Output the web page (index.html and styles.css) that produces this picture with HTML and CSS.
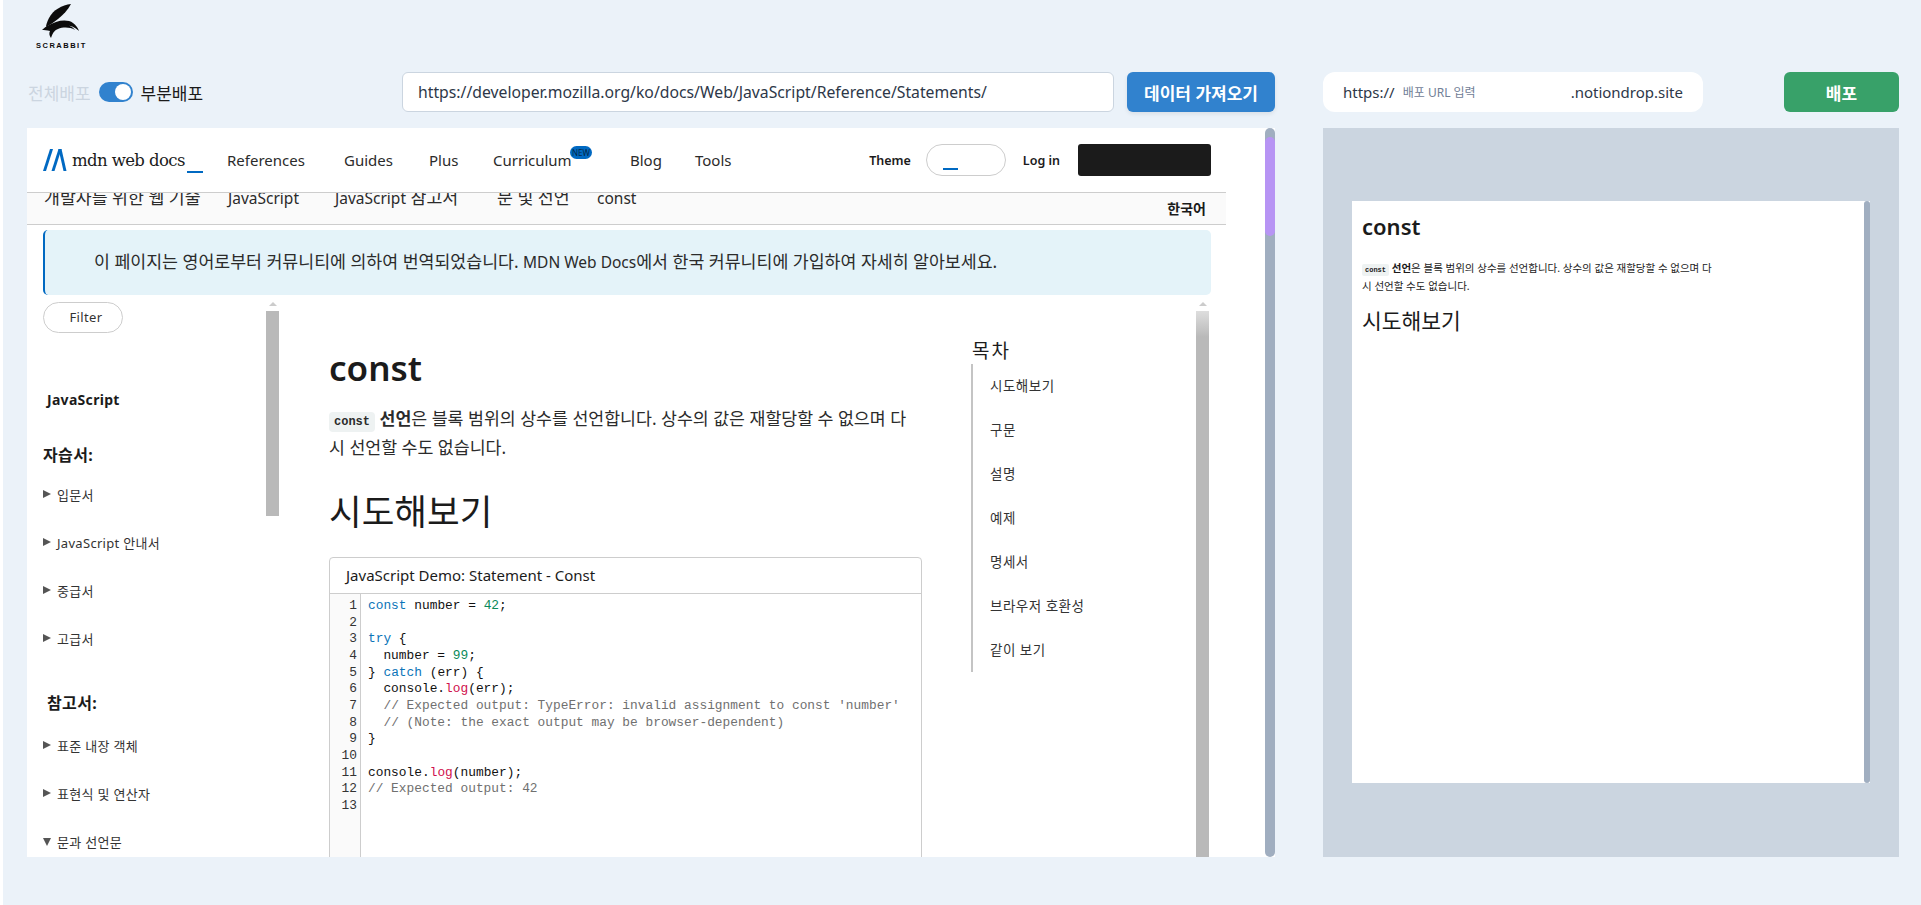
FILE: index.html
```html
<!DOCTYPE html>
<html lang="ko">
<head>
<meta charset="utf-8"/>
<title>Scrabbit</title>
<link rel="stylesheet" href="styles.css">
</head>
<body>
<div class="page">

  <!-- 로고 -->
  <header class="brand">
    <svg class="brand-mark" viewBox="0 0 37 35" width="37" height="35">
      <path fill="#0c0c0c" d="M29 0C20 1 11 6 7 14C5 18 4 21 4 23C8 21 12 18 16 15C21 11 26 6 29 0Z"/>
      <path fill="#0c0c0c" d="M0 26C4 22 9 20 14 18C20 16 27 16 31 19C34 21 36 24 37 27C33 23 28 21 22 21C27 21 31 23 33 26C28 23 21 23 16 25C13 26 11 28 9 34C7 31 7 29 8 27C5 26 2 26 0 26Z"/>
    </svg>
    <span class="brand-name">SCRABBIT</span>
  </header>

  <div class="workspace">

    <!-- 왼쪽: 원본 페이지 -->
    <section class="left-col">
      <div class="toolbar">
        <div class="mode-switch">
          <span class="mode-off">전체배포</span>
          <span class="toggle"><span class="toggle-knob"></span></span>
          <span class="mode-on">부분배포</span>
        </div>
        <div class="url-input">https://developer.mozilla.org/ko/docs/Web/JavaScript/Reference/Statements/</div>
        <button class="fetch-btn" type="button">데이터 가져오기</button>
      </div>

      <div class="frame">
        <div class="frame-view">
          <nav class="mdn-nav">
            <div class="mdn-logo">
              <svg viewBox="0 0 24 22" width="24" height="22">
                <path fill="#0069c2" d="M0 22L7 0H10L3 22Z"/>
                <path fill="#0069c2" d="M8.500 22L15.500 0H18.500L11.500 22Z"/>
                <path fill="#0069c2" d="M15.500 0H18.500L23.500 22H20.500Z"/>
              </svg>
              <span class="mdn-word">mdn web docs</span>
              <span class="mdn-cursor"></span>
            </div>
            <div class="mdn-links">
              <a>References</a>
              <a>Guides</a>
              <a>Plus</a>
              <a class="has-badge">Curriculum<span class="new-badge">NEW</span></a>
              <a>Blog</a>
              <a>Tools</a>
            </div>
            <div class="mdn-user">
              <span class="user-label">Theme</span>
              <span class="theme-pill"><span class="theme-cursor"></span></span>
              <span class="user-label">Log in</span>
              <span class="signup-box"></span>
            </div>
          </nav>

          <div class="crumbs">
            <div class="crumb-list">
              <span class="crumb-a">개발자를 위한 웹 기술</span>
              <span class="crumb-b latin">JavaScript</span>
              <span class="crumb-c"><span class="latin">JavaScript</span> 참고서</span>
              <span class="crumb-d">문 및 선언</span>
              <span class="latin">const</span>
            </div>
            <span class="lang">한국어</span>
          </div>

          <div class="notice">이 페이지는 영어로부터 커뮤니티에 의하여 번역되었습니다. <span class="latin">MDN Web Docs</span>에서 한국 커뮤니티에 가입하여 자세히 알아보세요.</div>

          <div class="docs">
            <aside class="sidebar">
              <div class="side-list">
                <div class="filter">Filter</div>
                <div class="side-title">JavaScript</div>
                <h4 class="side-head">자습서:</h4>
                <div class="side-item"><i class="tri"></i>입문서</div>
                <div class="side-item"><i class="tri"></i>JavaScript 안내서</div>
                <div class="side-item"><i class="tri"></i>중급서</div>
                <div class="side-item"><i class="tri"></i>고급서</div>
                <h4 class="side-head side-head-ref">참고서:</h4>
                <div class="side-item"><i class="tri"></i>표준 내장 객체</div>
                <div class="side-item"><i class="tri"></i>표현식 및 연산자</div>
                <div class="side-item"><i class="tri tri-open"></i>문과 선언문</div>
              </div>
              <div class="side-scroll">
                <span class="arrow-up"></span>
                <span class="side-thumb"></span>
              </div>
            </aside>

            <main class="article">
              <h1>const</h1>
              <p class="lead"><code>const</code> <strong>선언</strong>은 블록 범위의 상수를 선언합니다. 상수의 값은 재할당할 수 없으며 다시 선언할 수도 없습니다.</p>
              <h2>시도해보기</h2>
              <div class="demo">
                <div class="demo-title">JavaScript Demo: Statement - Const</div>
                <div class="demo-body">
                  <pre class="gutter">1
2
3
4
5
6
7
8
9
10
11
12
13</pre>
                  <pre class="code"><span class="kw">const</span> number = <span class="num">42</span>;

<span class="kw">try</span> {
  number = <span class="num">99</span>;
} <span class="kw">catch</span> (err) {
  console.<span class="fn">log</span>(err);
  <span class="cm">// Expected output: TypeError: invalid assignment to const 'number'</span>
  <span class="cm">// (Note: the exact output may be browser-dependent)</span>
}

console.<span class="fn">log</span>(number);
<span class="cm">// Expected output: 42</span>
</pre>
                </div>
              </div>
            </main>

            <aside class="toc">
              <div class="toc-title">목차</div>
              <ul class="toc-list">
                <li>시도해보기</li>
                <li>구문</li>
                <li>설명</li>
                <li>예제</li>
                <li>명세서</li>
                <li>브라우저 호환성</li>
                <li>같이 보기</li>
              </ul>
            </aside>

            <div class="main-scroll">
              <span class="arrow-up"></span>
              <span class="main-thumb"></span>
            </div>
          </div>
        </div>
        <div class="frame-scroll"><span class="frame-thumb"></span></div>
      </div>
    </section>

    <!-- 오른쪽: 배포 미리보기 -->
    <section class="right-col">
      <div class="toolbar">
        <div class="deploy-input">
          <span class="scheme">https://</span>
          <span class="placeholder">배포 URL 입력</span>
          <span class="suffix">.notiondrop.site</span>
        </div>
        <button class="deploy-btn" type="button">배포</button>
      </div>
      <div class="preview">
        <div class="preview-page">
          <div class="preview-body">
            <div class="pv-title">const</div>
            <p class="pv-lead"><code>const</code> <strong>선언</strong>은 블록 범위의 상수를 선언합니다. 상수의 값은 재할당할 수 없으며 다시 선언할 수도 없습니다.</p>
            <div class="pv-h2">시도해보기</div>
          </div>
          <div class="preview-scroll"></div>
        </div>
      </div>
    </section>

  </div>
</div>
</body>
</html>
```

FILE: styles.css
```css
* {
  box-sizing: border-box;
}

body {
  margin: 0;
  background: #fff;
  font-family: "Noto Sans", "Noto Sans CJK KR", sans-serif;
  color: #1b1b1b;
}

.page {
  margin-left: 3px;
  height: 905px;
  overflow: hidden;
  background: #ebf2f9;
}

/* latin runs sit smaller next to the hangul */
.latin {
  font-size: 15.500px;
}

/* logo */
.brand {
  height: 72px;
  padding: 4px 0 0 33px;
  width: 100px;
  display: flex;
  flex-direction: column;
}

.brand-mark {
  margin-left: 6px;
}

.brand-name {
  margin-top: 2px;
  font-family: "Liberation Sans", sans-serif;
  font-size: 7.500px;
  line-height: 9px;
  font-weight: 700;
  letter-spacing: 1.500px;
  color: #0c0c0c;
}

.workspace {
  display: flex;
  gap: 48px;
  padding-left: 24px;
}

.left-col {
  width: 1248px;
}

.right-col {
  width: 576px;
}

.toolbar {
  display: flex;
  height: 40px;
  margin-bottom: 16px;
}

/* toggle */
.mode-switch {
  width: 375px;
  padding-left: 1px;
  display: flex;
  align-items: center;
  font-size: 17px;
}

.mode-off {
  color: #cbd5e0;
}

.toggle {
  width: 34px;
  height: 20px;
  margin: 0 8px;
  border-radius: 10px;
  background: #3182ce;
  display: flex;
  justify-content: flex-end;
  align-items: center;
  padding-right: 2px;
}

.toggle-knob {
  width: 16px;
  height: 16px;
  border-radius: 50%;
  background: #fff;
}

.url-input {
  flex: 1;
  margin-right: 13px;
  padding-left: 15px;
  background: #fff;
  border: 1px solid #cbd5e0;
  border-radius: 6px;
  font-size: 15.750px;
  line-height: 38px;
  color: #2d3748;
}

.fetch-btn {
  width: 148px;
  border: none;
  border-radius: 6px;
  background: #3182ce;
  color: #fff;
  font-family: inherit;
  font-size: 17px;
  font-weight: 700;
  box-shadow: 0 2px 4px rgba(0, 0, 0, 0.08);
}

/* iframe area */
.frame {
  display: flex;
  height: 729px;
  background: #fff;
}

.frame-view {
  width: 1238px;
  overflow: hidden;
}

.frame-scroll {
  width: 10px;
  background: #a0aec0;
  border-radius: 5px;
  padding-top: 9px;
}

.frame-thumb {
  display: block;
  height: 99px;
  background: #b794f4;
  border-radius: 5px;
}

.mdn-nav {
  width: 1199px;
  height: 65px;
  padding: 16px 15px 0 16px;
  display: flex;
  align-items: flex-start;
  border-bottom: 1px solid #cdcdcd;
}

.mdn-logo {
  width: 184px;
  height: 32px;
  display: flex;
  align-items: center;
}

.mdn-word {
  margin-left: 5px;
  font-family: "DejaVu Serif", serif;
  font-size: 16.500px;
  letter-spacing: -0.6px;
  white-space: nowrap;
}

.mdn-cursor {
  width: 16px;
  height: 2px;
  margin: 24px 0 0 2px;
  background: #0069c2;
}

.mdn-links {
  display: grid;
  grid-template-columns: 117px 85px 64px 137px 65px 60px;
  font-size: 15px;
  line-height: 32px;
  color: #2b2b2b;
}

.has-badge {
  position: relative;
}

.new-badge {
  position: absolute;
  left: 77px;
  top: 2px;
  width: 22px;
  height: 13px;
  border-radius: 7px;
  background: #0069c2;
  color: #03284a;
  font-size: 8px;
  line-height: 13px;
  text-align: center;
}

.mdn-user {
  margin-left: auto;
  display: flex;
  align-items: center;
  height: 32px;
}

.user-label {
  font-size: 12.500px;
  font-weight: 600;
}

.theme-pill {
  width: 80px;
  height: 32px;
  margin: 0 17px 0 15px;
  border: 1px solid #cdcdcd;
  border-radius: 16px;
  padding: 23px 0 0 16px;
}

.theme-cursor {
  display: block;
  width: 15px;
  height: 2px;
  background: #0069c2;
}

.signup-box {
  width: 133px;
  height: 32px;
  margin-left: 18px;
  background: #1b1b1b;
  border-radius: 3px;
}

.crumbs {
  width: 1199px;
  height: 32px;
  padding: 0 20px 0 17px;
  display: flex;
  justify-content: space-between;
  background: #fafafa;
  border-bottom: 1px solid #cdcdcd;
  overflow: hidden;
}

.crumb-list {
  display: flex;
  font-size: 17.300px;
  line-height: 20px;
  margin-top: -5px;
  color: #2b2b2b;
}

.crumb-a { width: 184px; }
.crumb-b { width: 107px; }
.crumb-c { width: 162px; }
.crumb-d { width: 100px; }

.lang {
  margin-top: 7px;
  font-size: 14px;
  line-height: 18px;
  font-weight: 600;
}

.notice {
  width: 1168px;
  height: 65px;
  margin: 5px 0 0 16px;
  padding-left: 49px;
  background: #e4f3f9;
  border-left: 2px solid #0069c2;
  border-radius: 5px;
  font-size: 17.300px;
  line-height: 64px;
  color: #2b2b2b;
}

/* docs body */
.docs {
  display: flex;
  height: 563px;
  margin-top: 1px;
  padding-left: 16px;
  overflow: hidden;
}

.sidebar {
  display: flex;
  width: 236px;
  flex: none;
}

.side-list {
  width: 223px;
  padding-top: 6px;
}

.filter {
  width: 80px;
  height: 31px;
  padding-left: 6px;
  border: 1px solid #cdcdcd;
  border-radius: 16px;
  font-size: 13px;
  line-height: 29px;
  letter-spacing: 0.4px;
  text-align: center;
  color: #333;
}

.side-title {
  margin: 55px 0 0 4px;
  font-size: 14px;
  line-height: 24px;
  font-weight: 700;
  letter-spacing: 0.3px;
}

.side-head {
  margin: 31px 0 0;
  font-size: 16px;
  line-height: 24px;
  font-weight: 700;
  letter-spacing: 0.4px;
}

.side-head-ref {
  margin: 29px 0 0 4px;
}

.side-item {
  height: 48px;
  display: flex;
  align-items: center;
  font-size: 13px;
  letter-spacing: 0.3px;
  color: #333;
}

.side-head + .side-item {
  margin-top: 3px;
}

.side-head-ref + .side-item {
  margin-top: 6px;
}

.tri {
  width: 0;
  height: 0;
  margin-right: 6px;
  border-left: 8px solid #555;
  border-top: 4px solid transparent;
  border-bottom: 4px solid transparent;
}

.tri-open {
  margin-top: 1px;
  border-top: 8px solid #555;
  border-left: 4px solid transparent;
  border-right: 4px solid transparent;
  border-bottom: none;
}

.side-scroll,
.main-scroll {
  width: 13px;
  display: flex;
  flex-direction: column;
  align-items: center;
}

.main-scroll {
  flex: none;
}

.arrow-up {
  margin-top: 6px;
  border-left: 4px solid transparent;
  border-right: 4px solid transparent;
  border-bottom: 4px solid #ccc;
}

.side-thumb,
.main-thumb {
  width: 13px;
  margin-top: 5px;
  background: #b9b9b9;
}

.side-thumb {
  height: 205px;
}

.main-thumb {
  height: 548px;
  background: linear-gradient(#dedede, #b9b9b9 26px);
}

.article {
  width: 593px;
  margin-left: 50px;
  flex: none;
}

.article h1 {
  margin: 48px 0 0;
  font-size: 35px;
  line-height: 48px;
  font-weight: 600;
}

.lead {
  margin: 12px 0 0;
  width: 582px;
  font-size: 17.300px;
  line-height: 29px;
  color: #2b2b2b;
}

.lead code {
  padding: 3px 5px;
  background: #eef2f2;
  border-radius: 4px;
  font-family: "Liberation Mono", monospace;
  font-size: 12px;
  line-height: 1;
  font-weight: 700;
}

.lead strong {
  font-weight: 700;
}

.article h2 {
  margin: 25px 0 0;
  font-size: 35.500px;
  line-height: 48px;
  font-weight: 400;
}

.demo {
  margin-top: 22px;
  border: 1px solid #cdcdcd;
  border-radius: 4px 4px 0 0;
  height: 360px;
}

.demo-title {
  height: 36px;
  padding-left: 16px;
  font-size: 15px;
  line-height: 34px;
  border-bottom: 1px solid #cdcdcd;
}

.demo-body {
  display: flex;
  height: 323px;
}

.gutter,
.code {
  margin: 0;
  padding-top: 4px;
  font-family: "Liberation Mono", monospace;
  font-size: 12.850px;
  line-height: 16.670px;
}

.gutter {
  width: 31px;
  padding-right: 3px;
  text-align: right;
  background: #fafafa;
  border-right: 1px solid #cdcdcd;
  color: #333;
}

.code {
  padding-left: 7px;
  color: #111;
}

.kw { color: #0b74b8; }
.num { color: #0a8a5a; }
.fn { color: #d0104c; }
.cm { color: #707070; }

.toc {
  width: 225px;
  margin-left: 49px;
  flex: none;
}

.toc-title {
  margin-top: 42px;
  font-size: 19px;
  line-height: 26px;
  letter-spacing: 2px;
  padding-left: 1px;
}

.toc-list {
  margin: 0;
  padding: 0;
  list-style: none;
  height: 308px;
  border-left: 2px solid #c4c4c4;
}

.toc-list li {
  height: 44px;
  padding-left: 17px;
  font-size: 13.500px;
  line-height: 44px;
  letter-spacing: 0.5px;
  color: #333;
}

/* right side */
.deploy-input {
  width: 380px;
  padding: 0 20px;
  display: flex;
  align-items: center;
  background: #fff;
  border-radius: 12px;
  font-size: 15px;
  color: #2d3748;
}

.placeholder {
  margin-left: 8px;
  font-size: 12px;
  color: #718096;
}

.suffix {
  margin-left: auto;
}

.deploy-btn {
  width: 115px;
  margin-left: auto;
  border: none;
  border-radius: 6px;
  background: #38a169;
  color: #fff;
  font-family: inherit;
  font-size: 17px;
  font-weight: 700;
}

.preview {
  height: 729px;
  padding: 73px 0 0 29px;
  background: #cbd5e0;
}

.preview-page {
  display: flex;
  width: 518px;
  height: 582px;
  background: #fff;
}

.preview-body {
  width: 512px;
  padding: 8px 10px 0;
}

.pv-title {
  font-size: 22px;
  line-height: 34px;
  font-weight: 600;
}

.pv-lead {
  margin: 16px 0 0;
  width: 350px;
  font-size: 10.500px;
  line-height: 18px;
}

.pv-lead code {
  padding: 2px 3px;
  background: #eef2f2;
  border-radius: 2px;
  font-family: "Liberation Mono", monospace;
  font-size: 7px;
  line-height: 1;
  font-weight: 700;
}

.pv-h2 {
  margin-top: 12px;
  font-size: 21.500px;
  line-height: 28px;
}

.preview-scroll {
  width: 6px;
  background: #a0aec0;
  border-radius: 3px;
}
```
